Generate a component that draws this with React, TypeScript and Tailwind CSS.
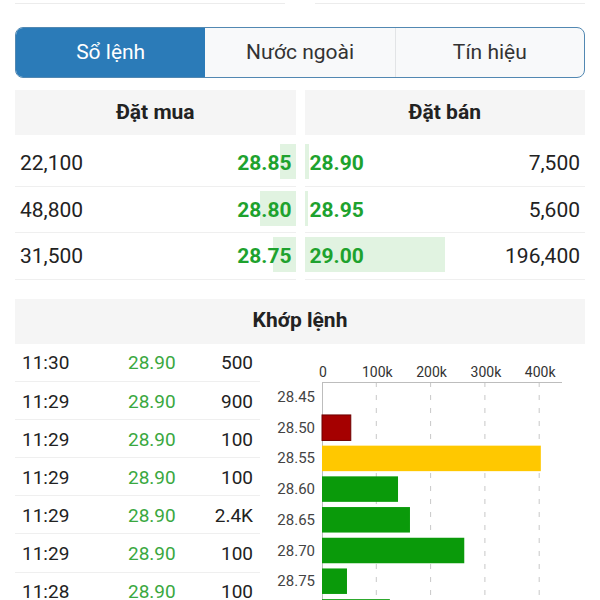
import React from 'react';

const bids = [
    { qty: '22,100', price: '28.85', bar: 16 },
    { qty: '48,800', price: '28.80', bar: 36 },
    { qty: '31,500', price: '28.75', bar: 23 },
];

const asks = [
    { price: '28.90', qty: '7,500', bar: 4 },
    { price: '28.95', qty: '5,600', bar: 3 },
    { price: '29.00', qty: '196,400', bar: 140 },
];

const trades = [
    ['11:30', '28.90', '500'],
    ['11:29', '28.90', '900'],
    ['11:29', '28.90', '100'],
    ['11:29', '28.90', '100'],
    ['11:29', '28.90', '2.4K'],
    ['11:29', '28.90', '100'],
    ['11:28', '28.90', '100'],
];

// volume by price, in thousands
const volumes = [
    { price: '28.45', vol: 0, color: '#0a9a0a' },
    { price: '28.50', vol: 53, color: '#a50000' },
    { price: '28.55', vol: 403, color: '#ffc800' },
    { price: '28.60', vol: 140, color: '#0a9a0a' },
    { price: '28.65', vol: 162, color: '#0a9a0a' },
    { price: '28.70', vol: 262, color: '#0a9a0a' },
    { price: '28.75', vol: 46, color: '#0a9a0a' },
    { price: '28.80', vol: 125, color: '#0a9a0a' },
];

function VolumeChart() {
    const x0 = 52;
    const perK = 0.543;
    const ticks = [0, 100, 200, 300, 400];
    return (
        <svg width="330" height="260" className="block shrink-0">
            {ticks.map((t) => (
                <g key={t}>
                    <text x={x0 + t * perK + 1} y="33" textAnchor="middle" fontSize="14" fill="#333" fontFamily="Roboto, sans-serif">
                        {t === 0 ? '0' : `${t}k`}
                    </text>
                    {t > 0 && (
                        <line x1={x0 + t * perK} y1="38" x2={x0 + t * perK} y2="260" stroke="#c8c8c8" strokeWidth="1" strokeDasharray="5 8" />
                    )}
                </g>
            ))}
            <line x1={x0} y1="38.5" x2="292" y2="38.5" stroke="#bdbdbd" strokeWidth="1" />
            <line x1={x0 + 0.5} y1="38" x2={x0 + 0.5} y2="260" stroke="#bdbdbd" strokeWidth="1" />
            {volumes.map((v, i) => {
                const cy = 53 + i * 30.7;
                return (
                    <g key={v.price}>
                        <text x="45" y={cy + 5} textAnchor="end" fontSize="15" fill="#444" fontFamily="Roboto, sans-serif">
                            {v.price}
                        </text>
                        {v.vol > 0 && (
                            <rect
                                x={x0}
                                y={cy - 12.75}
                                width={v.vol * perK}
                                height="25.5"
                                fill={v.color}
                                stroke={v.color === '#a50000' ? '#6e0000' : 'none'}
                                strokeWidth="1"
                            />
                        )}
                    </g>
                );
            })}
        </svg>
    );
}

export default function App() {
    return (
        <main className="w-[600px] h-[600px] overflow-hidden bg-white text-[#222] font-['Roboto','Noto_Sans',sans-serif]">
            {/* Cards above, cut off */}
            <div className="flex justify-between px-[15px]">
                <div className="w-[270px] h-[4px] border-b border-[#ececec]"></div>
                <div className="w-[270px] h-[4px] border-b border-[#ececec]"></div>
            </div>

            {/* Tabs */}
            <div className="mx-[15px] mt-[23px] h-[51px] grid grid-cols-3 rounded-[8px] border-[1.5px] border-[#5288b2] overflow-hidden bg-[#f8f9fa] text-[21px]">
                <div className="flex items-center justify-center bg-[#2b7bb8] text-white">Sổ lệnh</div>
                <div className="flex items-center justify-center text-[#333]">Nước ngoài</div>
                <div className="flex items-center justify-center text-[#333] border-l border-[#e2e4e6]">Tín hiệu</div>
            </div>

            {/* Order book */}
            <div className="mx-[15px] mt-[12px] grid grid-cols-2 gap-x-[9px]">
                <div>
                    <div className="h-[45px] bg-[#f5f5f5] flex items-center justify-center text-[21px] font-bold">Đặt mua</div>
                    <div className="mt-[5px]">
                        {bids.map((b) => (
                            <div key={b.price} className="h-[46.5px] border-b border-[#efefef] flex items-center justify-between pl-[5px] pt-[2px] text-[21px]">
                                <span>{b.qty}</span>
                                <div className="relative h-full flex items-center pr-[4px]">
                                    <div className="absolute right-0 top-[2px] h-[35px] bg-[#e1f3e1]" style={{ width: b.bar }}></div>
                                    <span className="relative font-bold text-[#1ea22e]">{b.price}</span>
                                </div>
                            </div>
                        ))}
                    </div>
                </div>
                <div>
                    <div className="h-[45px] bg-[#f5f5f5] flex items-center justify-center text-[21px] font-bold">Đặt bán</div>
                    <div className="mt-[5px]">
                        {asks.map((a) => (
                            <div key={a.price} className="relative h-[46.5px] border-b border-[#efefef] flex items-center justify-between pr-[5px] pt-[2px] text-[21px]">
                                <div className="absolute left-0 top-[4px] h-[35px] bg-[#e1f3e1]" style={{ width: a.bar }}></div>
                                <span className="relative pl-[5px] font-bold text-[#1ea22e]">{a.price}</span>
                                <span>{a.qty}</span>
                            </div>
                        ))}
                    </div>
                </div>
            </div>

            {/* Matched orders */}
            <div className="mx-[15px] mt-[19px] h-[45px] bg-[#f5f5f5] flex items-center justify-center text-[21px] font-bold">Khớp lệnh</div>
            <div className="flex pl-[15px] gap-[10px]">
                <div className="w-[245px] shrink-0">
                    {trades.map((t, i) => (
                        <div key={i} className="h-[38.2px] border-b border-[#efefef] grid grid-cols-[106px_1fr_auto] items-center pl-[7px] pr-[7px] pt-[3px] text-[19px]">
                            <span>{t[0]}</span>
                            <span className="text-[#3aa83f]">{t[1]}</span>
                            <span className="text-right">{t[2]}</span>
                        </div>
                    ))}
                </div>
                <VolumeChart />
            </div>
        </main>
    );
}
